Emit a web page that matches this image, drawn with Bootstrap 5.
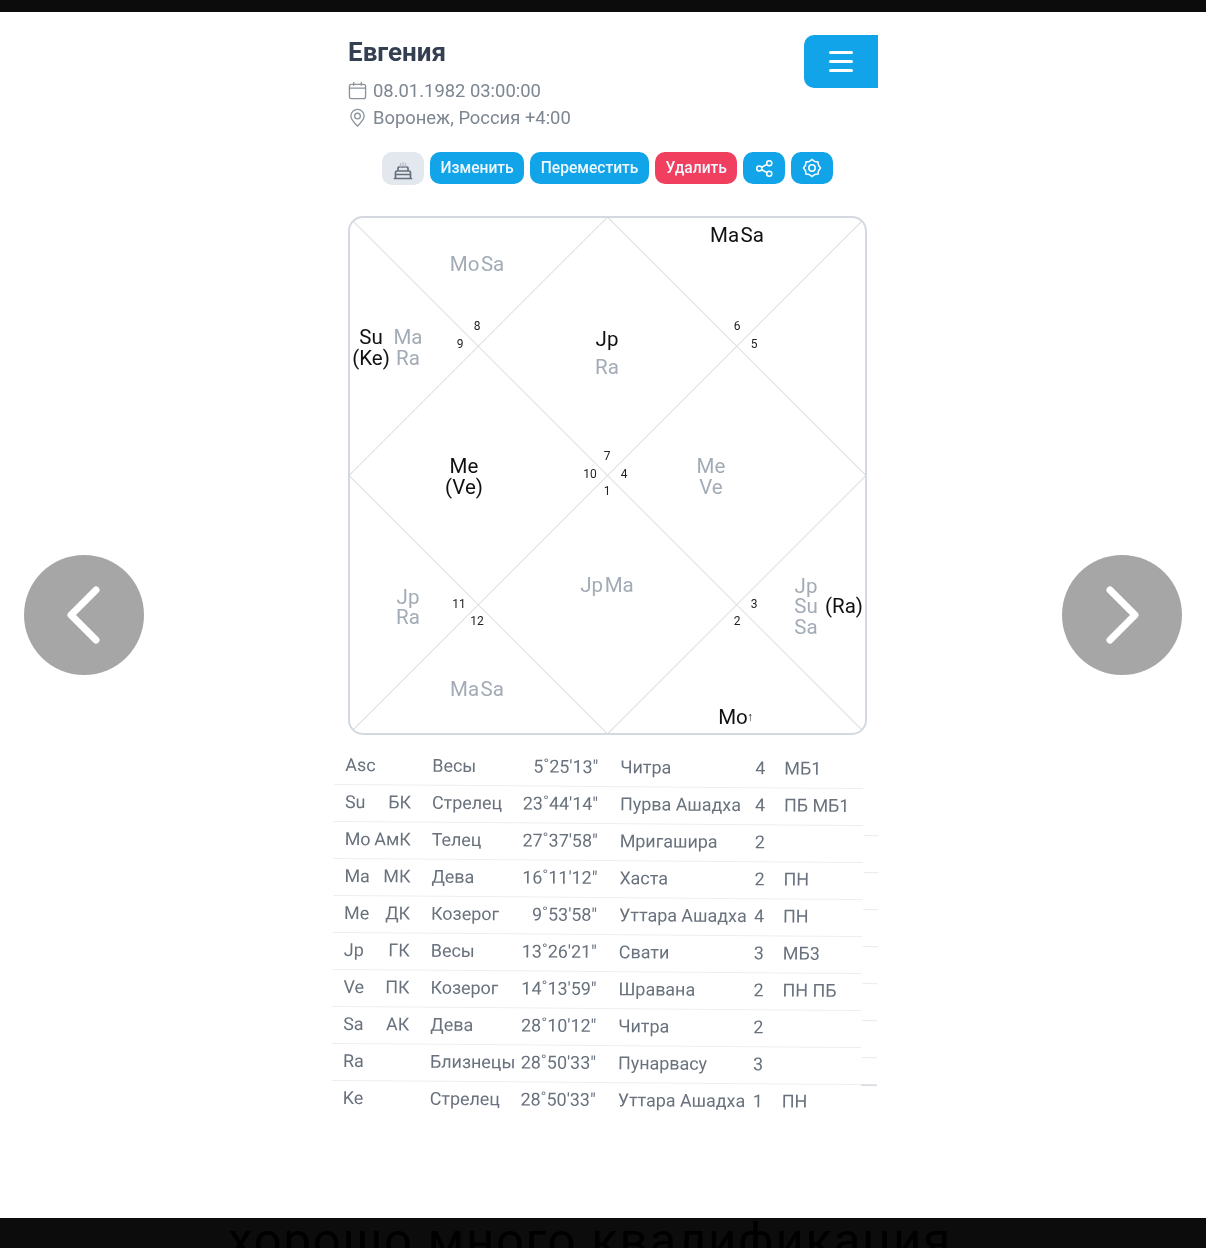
<!DOCTYPE html>
<html lang="ru">
<head>
<meta charset="utf-8">
<title>Евгения</title>
<link href="https://cdn.jsdelivr.net/npm/bootstrap@5.3.0/dist/css/bootstrap.min.css" rel="stylesheet">
<style>
html,body{margin:0;height:1248px;overflow:hidden;background:#fff;font-family:Roboto,"Liberation Sans",sans-serif}
.frame{height:1248px;display:flex;flex-direction:column;position:relative}
.bar-top{height:12px;background:#0c0c0c;flex:none}
.bar-bottom{height:30px;background:#0c0c0c;flex:none;overflow:hidden;color:#000;font-size:49px;line-height:30px;text-align:center;letter-spacing:1.800px;white-space:nowrap;padding:8px 26px 0 0}
.stage{flex:1 1 auto;min-height:0}
.sheet{width:530px;margin-left:348px;filter:blur(.35px)}
.head-row{padding-top:23px;height:127px}
.who{font-size:26px;font-weight:700;color:#343f52;line-height:34px;margin:0 0 8px}
.meta{font-size:18.400px;line-height:27px;color:#7d8691}
.meta svg{width:19px;height:19px;margin-right:6px;vertical-align:-3px}
.burger{width:74px;height:53px;background:#12a4e8;border-radius:10px 0 0 10px;border:0;display:flex;flex-direction:column;gap:6px;align-items:center;justify-content:center;padding:0}
.burger-line{display:block;width:24px;height:3px;background:#fff;border-radius:2px}
.actions{margin-left:34px;gap:6px;height:33px;margin-top:13px}
.act{height:32px;padding:0 10.500px;font-size:15.600px;font-weight:500;border-radius:10px;border:0;color:#eef9ff;background:#12a4e8;line-height:32px;display:flex;align-items:center;justify-content:center}
.act:hover{background:#12a4e8;color:#fff}
.act-red{background:#f03f5f}
.act-red:hover{background:#f03f5f}
.act-grey{background:#e3e7ee;width:42px;height:33px;padding:0}
.act-grey:hover{background:#e3e7ee}
.act-ico{width:42px;padding:0}
.chart{display:block;width:530px;height:530px;margin-top:31px}
.chart text{font-family:Roboto,"Liberation Sans",sans-serif;font-size:20.500px;fill:#111;text-anchor:middle;dominant-baseline:central}
.chart .dim{fill:#a3acb6}
.chart .num{font-size:12px;fill:#222}
.chart .up{font-size:12px}
.planets{width:529px;margin:3px 0 0 -15px;table-layout:fixed;transform:rotate(.45deg);transform-origin:50% 50%;font-size:17.900px;color:#68717c;--bs-table-bg:transparent;--bs-table-color:#68717c}
.planets td{height:37px;padding:0;border-bottom:1px solid #eceef0;white-space:nowrap;vertical-align:middle;position:relative}
.planets tr:last-child td{border-bottom:0}
.planets tr:nth-child(n+2):nth-child(-n+8) td:last-child::after{content:"";position:absolute;left:100%;bottom:-11px;width:15px;height:1px;background:#e8eaed;margin-left:1px}
.planets tr:nth-child(9) td:last-child::after{content:"";position:absolute;left:100%;bottom:-2px;width:16px;height:2px;background:#dcdfe3}
.c-name{padding-left:11px!important}
.c-tag{text-align:right}
.c-sign{padding-left:21px!important}
.c-deg{text-align:right}
.c-nak{padding-left:22px!important}
.c-pada{padding-left:2px!important}
.nav-arrow{position:absolute;top:555px;width:120px;height:120px;border-radius:50%;background:#a6a6a6;border:0;padding:0;display:flex;align-items:center;justify-content:center}
.nav-prev{left:24px}
.nav-next{left:1062px}
</style>
</head>
<body>
<div class="frame">
  <div class="bar-top"></div>
  <main class="stage">
    <div class="sheet">
      <div class="d-flex justify-content-between align-items-start head-row">
        <div>
          <h1 class="who">Евгения</h1>
          <div class="meta">
            <svg viewBox="0 0 20 20" fill="none" stroke="#8b939d" stroke-width="1.400" stroke-linecap="round"><rect x="1.500" y="3.500" width="17" height="15" rx="2"/><path d="M6 1.500v3M14 1.500v3M1.500 7.500h17"/></svg>08.01.1982 03:00:00
          </div>
          <div class="meta">
            <svg viewBox="0 0 20 20" fill="none" stroke="#8b939d" stroke-width="1.400"><path d="M10 19c-3-3-7-6.500-7-10.500a7 7 0 0 1 14 0C17 12.500 13 16 10 19z"/><circle cx="10" cy="8.500" r="3"/></svg>Воронеж, Россия +4:00
          </div>
        </div>
        <button type="button" class="burger" aria-label="Меню"><span class="burger-line"></span><span class="burger-line"></span><span class="burger-line"></span></button>
      </div>

      <div class="d-flex actions">
        <button type="button" class="btn act act-grey" aria-label="Торт"><svg width="20" height="22" viewBox="0 0 20 22" fill="none" stroke="#66707c" stroke-width="1.700" stroke-linecap="round" stroke-linejoin="round"><path d="M1.500 20.500h17M2.500 20.500v-6a1.500 1.500 0 0 1 1.500-1.500h12a1.500 1.500 0 0 1 1.500 1.500v6M5 13v-3a1 1 0 0 1 1-1h8a1 1 0 0 1 1 1v3M2.500 16.500h15"/><path stroke="#b4bac3" stroke-width="1.200" d="M7.500 9V5.500M10 9V4.500M12.500 9V5.500"/></svg></button>
        <button type="button" class="btn act">Изменить</button>
        <button type="button" class="btn act">Переместить</button>
        <button type="button" class="btn act act-red">Удалить</button>
        <button type="button" class="btn act act-ico" aria-label="Поделиться"><svg width="19" height="19" viewBox="0 0 20 20" fill="none" stroke="#fff" stroke-width="1.600"><circle cx="15" cy="4.500" r="2.700"/><circle cx="4.500" cy="10" r="2.700"/><circle cx="15" cy="15.500" r="2.700"/><path d="M7 8.700l5.600-3M7 11.300l5.600 3"/></svg></button>
        <button type="button" class="btn act act-ico" aria-label="Настройки"><svg width="20" height="20" viewBox="0 0 20 20" fill="none" stroke="#fff" stroke-width="1.500" stroke-linejoin="round"><path d="M18.600 10L16.470 12.680 16.080 16.080 12.680 16.470 10 18.600 7.320 16.470 3.920 16.080 3.530 12.680 1.400 10 3.530 7.320 3.920 3.920 7.320 3.530 10 1.400 12.680 3.530 16.080 3.920 16.470 7.320Z"/><circle cx="10" cy="10" r="3.200"/></svg></button>
      </div>

      <svg class="chart" viewBox="348 216 530 530" role="img" aria-label="Натальная карта">
        <g fill="none" stroke="#dfe2e5" stroke-width="1.100">
          <path d="M353 221L862 730M862 221L353 730"/>
          <path d="M607.500 217L866 475.500 607.500 734 349 475.500z"/>
        </g>
        <rect x="349" y="217" width="517" height="517" rx="14" fill="none" stroke="#d3d9df" stroke-width="2"/>
        <text class="dim" x="477" y="264">Mo<tspan dx="1.500">Sa</tspan></text>
        <text x="737" y="235">Ma<tspan dx="1.500">Sa</tspan></text>
        <text x="371" y="337">Su</text><text x="371" y="358">(Ke)</text>
        <text class="dim" x="408" y="337">Ma</text><text class="dim" x="408" y="358">Ra</text>
        <text x="607" y="339">Jp</text><text class="dim" x="607" y="367">Ra</text>
        <text x="464" y="466">Me</text><text x="464" y="487">(Ve)</text>
        <text class="dim" x="711" y="466">Me</text><text class="dim" x="711" y="487">Ve</text>
        <text class="dim" x="408" y="597">Jp</text><text class="dim" x="408" y="617">Ra</text>
        <text class="dim" x="607" y="585">Jp<tspan dx="1.500">Ma</tspan></text>
        <text class="dim" x="806" y="586">Jp</text><text class="dim" x="806" y="606">Su</text><text class="dim" x="806" y="627">Sa</text>
        <text x="844" y="606">(Ra)</text>
        <text class="dim" x="477" y="689">Ma<tspan dx="1.500">Sa</tspan></text>
        <text x="733" y="717">Mo</text><text class="up" x="750" y="717">↑</text>
        <text class="num" x="477" y="326">8</text><text class="num" x="460" y="344">9</text>
        <text class="num" x="737" y="326">6</text><text class="num" x="754" y="344">5</text>
        <text class="num" x="607" y="456">7</text><text class="num" x="590" y="474">10</text>
        <text class="num" x="624" y="474">4</text><text class="num" x="607" y="491">1</text>
        <text class="num" x="459" y="604">11</text><text class="num" x="477" y="621">12</text>
        <text class="num" x="754" y="604">3</text><text class="num" x="737" y="621">2</text>
      </svg>

      <table class="table table-borderless planets">
        <colgroup><col style="width:40px"><col style="width:37px"><col style="width:106px"><col style="width:81px"><col style="width:155px"><col style="width:31px"><col style="width:79px"></colgroup>
        <tbody>
          <tr><td class="c-name">Asc</td><td class="c-tag"></td><td class="c-sign">Весы</td><td class="c-deg">5˚25'13"</td><td class="c-nak">Читра</td><td class="c-pada">4</td><td>МБ1</td></tr>
          <tr><td class="c-name">Su</td><td class="c-tag">БК</td><td class="c-sign">Стрелец</td><td class="c-deg">23˚44'14"</td><td class="c-nak">Пурва Ашадха</td><td class="c-pada">4</td><td>ПБ МБ1</td></tr>
          <tr><td class="c-name">Mo</td><td class="c-tag">АмК</td><td class="c-sign">Телец</td><td class="c-deg">27˚37'58"</td><td class="c-nak">Мригашира</td><td class="c-pada">2</td><td></td></tr>
          <tr><td class="c-name">Ma</td><td class="c-tag">МК</td><td class="c-sign">Дева</td><td class="c-deg">16˚11'12"</td><td class="c-nak">Хаста</td><td class="c-pada">2</td><td>ПН</td></tr>
          <tr><td class="c-name">Me</td><td class="c-tag">ДК</td><td class="c-sign">Козерог</td><td class="c-deg">9˚53'58"</td><td class="c-nak">Уттара Ашадха</td><td class="c-pada">4</td><td>ПН</td></tr>
          <tr><td class="c-name">Jp</td><td class="c-tag">ГК</td><td class="c-sign">Весы</td><td class="c-deg">13˚26'21"</td><td class="c-nak">Свати</td><td class="c-pada">3</td><td>МБ3</td></tr>
          <tr><td class="c-name">Ve</td><td class="c-tag">ПК</td><td class="c-sign">Козерог</td><td class="c-deg">14˚13'59"</td><td class="c-nak">Шравана</td><td class="c-pada">2</td><td>ПН ПБ</td></tr>
          <tr><td class="c-name">Sa</td><td class="c-tag">АК</td><td class="c-sign">Дева</td><td class="c-deg">28˚10'12"</td><td class="c-nak">Читра</td><td class="c-pada">2</td><td></td></tr>
          <tr><td class="c-name">Ra</td><td class="c-tag"></td><td class="c-sign">Близнецы</td><td class="c-deg">28˚50'33"</td><td class="c-nak">Пунарвасу</td><td class="c-pada">3</td><td></td></tr>
          <tr><td class="c-name">Ke</td><td class="c-tag"></td><td class="c-sign">Стрелец</td><td class="c-deg">28˚50'33"</td><td class="c-nak">Уттара Ашадха</td><td class="c-pada">1</td><td>ПН</td></tr>
        </tbody>
      </table>
    </div>
  </main>
  <div class="bar-bottom">хорошо много квалификация</div>

  <button type="button" class="nav-arrow nav-prev" aria-label="Назад"><svg width="40" height="64" viewBox="0 0 40 64" fill="none" stroke="#fff" stroke-width="7" stroke-linecap="round" stroke-linejoin="round"><path d="M32 7L7 32l25 25"/></svg></button>
  <button type="button" class="nav-arrow nav-next" aria-label="Вперёд"><svg width="40" height="64" viewBox="0 0 40 64" fill="none" stroke="#fff" stroke-width="7" stroke-linecap="round" stroke-linejoin="round"><path d="M8 7l25 25L8 57"/></svg></button>
</div>
</body>
</html>
